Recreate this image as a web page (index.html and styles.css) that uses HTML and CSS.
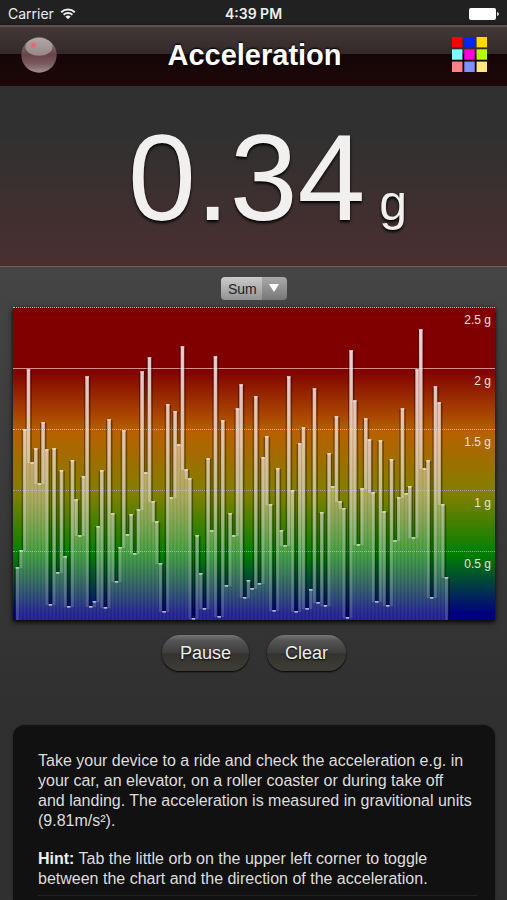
FILE: index.html
```html
<!DOCTYPE html>
<html lang="en">
<head>
<meta charset="utf-8">
<meta name="viewport" content="width=device-width, initial-scale=1">
<title>Acceleration</title>
<link rel="stylesheet" href="styles.css">
</head>
<body>
<div class="status">
  <div class="carrier">
    <span>Carrier</span>
    <svg class="wifi" viewBox="0 0 16 12" aria-hidden="true">
      <path d="M1.2 4.2C5 .6 11 .6 14.8 4.2M3.6 6.7C6 4.5 10 4.5 12.400 6.700" fill="none" stroke="#eee" stroke-width="1.9"/>
      <path d="M5.300 8.500C6.800 7.200 9.200 7.200 10.700 8.500L8 11.300Z" fill="#eee"/>
    </svg>
  </div>
  <span class="time">4:39 PM</span>
  <svg class="battery" viewBox="0 0 30 12" aria-hidden="true">
    <rect width="27" height="12" rx="2" fill="#fff"/>
    <path d="M28 4Q30 4.500 30 6T28 8Z" fill="#ddd"/>
  </svg>
</div>
<header class="bar">
  <button class="orb" aria-label="Toggle chart and direction">
    <svg viewBox="0 0 36 36" aria-hidden="true">
      <defs>
        <linearGradient id="ball" x1="0" y1="0" x2="0" y2="1">
          <stop offset="0" stop-color="#8d8080"/><stop offset=".5" stop-color="#684448"/>
          <stop offset=".75" stop-color="#7a5b5e"/><stop offset="1" stop-color="#a09093"/>
        </linearGradient>
        <linearGradient id="shine" x1="0" y1="0" x2="0" y2="1">
          <stop offset="0" stop-color="#b0a8a8"/><stop offset="1" stop-color="#988587"/>
        </linearGradient>
        <radialGradient id="spot">
          <stop offset="0" stop-color="#ff5566"/><stop offset="1" stop-color="#ff5566" stop-opacity="0"/>
        </radialGradient>
      </defs>
      <circle cx="18" cy="18" r="17.700" fill="url(#ball)"/>
      <ellipse cx="18" cy="9.800" rx="13.500" ry="9" fill="url(#shine)"/>
      <circle cx="12.500" cy="8" r="4" fill="url(#spot)"/>
    </svg>
  </button>
  <h1>Acceleration</h1>
  <button class="palette" aria-label="Colours">
    <svg viewBox="0 0 36 36" aria-hidden="true">
      <rect x="0" y="0" width="10.400" height="10.400" fill="#f00"/><rect x="12.300" y="0" width="10.400" height="10.400" fill="#0026ff"/><rect x="24.600" y="0" width="10.400" height="10.400" fill="#ffd800"/>
      <rect x="0" y="12.300" width="10.400" height="10.400" fill="#7ffdff"/><rect x="12.300" y="12.300" width="10.400" height="10.400" fill="#f0d"/><rect x="24.600" y="12.300" width="10.400" height="10.400" fill="#b6ff00"/>
      <rect x="0" y="24.600" width="10.400" height="10.400" fill="#ff7f86"/><rect x="12.300" y="24.600" width="10.400" height="10.400" fill="#8091ff"/><rect x="24.600" y="24.600" width="10.400" height="10.400" fill="#ffe97f"/>
    </svg>
  </button>
</header>
<section class="reading"><span class="value">0.34</span> <span class="unit">g</span></section>
<main>
  <div class="picker">
    <select aria-label="Axis"><option>Sum</option><option>X</option><option>Y</option><option>Z</option></select>
    <svg class="arrow" viewBox="0 0 10 8" aria-hidden="true"><path d="M0 0H10L5 8Z" fill="#fff"/></svg>
  </div>
  <div class="chart">
    <ul class="scale"><li>2.5 g</li><li>2 g</li><li>1.5 g</li><li>1 g</li><li>0.5 g</li></ul>
    <svg class="bars" viewBox="0 0 482 313" preserveAspectRatio="none" role="img" aria-label="Acceleration history">
      <defs>
        <linearGradient id="fade" gradientUnits="userSpaceOnUse" x1="0" y1="20" x2="0" y2="313">
          <stop offset="0" stop-color="#f4e8ec" stop-opacity=".68"/>
          <stop offset=".4" stop-color="#ece0e0" stop-opacity=".46"/>
          <stop offset=".75" stop-color="#e0dce0" stop-opacity=".27"/>
          <stop offset="1" stop-color="#e0dce0" stop-opacity=".14"/>
        </linearGradient>
      </defs>
      <g id="shades"></g><g id="columns"></g>
    </svg>
  </div>
  <div class="actions"><button>Pause</button><button>Clear</button></div>
</main>
<article class="info">
  <p>Take your device to a ride and check the acceleration e.g. in your car, an elevator, on a roller coaster or during take off<br>and landing. The acceleration is measured in gravitional units (9.81m/s²).</p>
  <p><b>Hint:</b> Tab the little orb on the upper left corner to toggle between the chart and the direction of the acceleration.</p>
  <hr>
</article>
<script src="chart.js"></script>
</body>
</html>
```
FILE: styles.css
```css
* { box-sizing: border-box; }
body {
  margin: 0;
  min-height: 100vh;
  display: flex;
  flex-direction: column;
  background: #303030;
  color: #eee;
  font-family: "Liberation Sans", sans-serif;
}
button { border: 0; padding: 0; background: none; font: inherit; color: inherit; }
svg { display: block; }

.status {
  height: 25px;
  padding: 2px 8px 0;
  display: grid;
  grid-template-columns: 1fr auto 1fr;
  align-items: center;
  background: #212121;
  font-family: Inter, sans-serif;
}
.carrier { display: flex; align-items: center; gap: 6px; font-size: 14px; }
.wifi { width: 16px; height: 12px; }
.time { font-size: 14px; font-weight: 600; }
.battery { width: 30px; height: 12px; justify-self: end; }

.bar {
  height: 61px;
  padding: 0 19px 3px 21px;
  display: flex;
  align-items: center;
  justify-content: space-between;
  border-top: 2px solid #5c5351;
  background: linear-gradient(#443938, #332929 45%, #150607 46%, #1c0709);
  box-shadow: 0 1px 3px #000;
}
.bar h1 {
  margin: 0;
  font-size: 29px;
  color: #fff;
  text-shadow: 0 -1px 2px #000;
}
.orb svg, .palette svg { width: 36px; height: 36px; }

.reading {
  height: 181px;
  padding: 22px 0 0 28px;
  text-align: center;
  line-height: 140px;
  font-size: 50px;
  color: #f2f0ef;
  text-shadow: 0 2px 3px #000;
  background: linear-gradient(#303030 25%, #4a2f30);
  border-bottom: 1px solid #6b6259;
}
.value { font-size: 122px; }

main {
  display: flex;
  flex-direction: column;
  padding: 10px 12px 54px 13px;
  background: linear-gradient(#454545, #303030 95%);
}
.picker { position: relative; align-self: center; }
.picker select {
  display: block;
  width: 66px;
  height: 23px;
  padding: 0 0 0 7px;
  border: 0;
  border-radius: 4px;
  appearance: none;
  font: 14px "Liberation Sans", sans-serif;
  color: #222;
  background:
    linear-gradient(#aaa, #777) right / 25px 100% no-repeat,
    linear-gradient(#ccc, #929292);
}
.arrow { position: absolute; right: 8px; top: 7px; width: 10px; height: 8px; pointer-events: none; }

.chart {
  display: grid;
  margin-top: 7px;
  background: linear-gradient(#800000 20%, #b86000 40%, #808000 60%, #008000 79%, #000080 98%);
  box-shadow: 0 2px 5px #000;
}
.scale, .bars { grid-area: 1 / 1; }
.scale {
  margin: 0;
  padding: 0 0 8px;
  list-style: none;
  font-size: 12px;
  text-align: right;
  line-height: 24px;
  color: #e8e0dc;
}
.scale li {
  height: 61px;
  padding-right: 4px;
  border-top: 1px dotted #bbb;
}
.scale li:nth-child(2) { border-top: 1px solid #d88f8f; }
.scale li:nth-child(n+4) { border-top-color: #87a9a0; }
.bars { width: 100%; height: 313px; }
.shade { fill: #000; opacity: .35; }
.column { fill: url(#fade); }
.stripe { fill: url(#fade); opacity: .4; }
.cap { fill: #fff; opacity: .7; }

.actions { display: flex; justify-content: center; gap: 18px; margin-top: 15px; }
.actions button {
  height: 36px;
  padding: 0 18px;
  border-radius: 18px;
  font-size: 18px;
  color: #eee;
  text-shadow: 0 1px 2px #000;
  background: linear-gradient(#777 0, #555 15%, #3d3d3d 50%, #35332f 52%, #3f3d38);
  box-shadow: 0 1px 2px #000;
}

.info {
  flex: 1;
  margin: 0 12px 0 13px;
  padding: 26px 18px 0 25px;
  border-radius: 12px 12px 0 0;
  background: #111;
  box-shadow: 0 0 2px #181818;
  font-size: 16px;
  line-height: 20px;
  color: #ddd;
}
.info p { margin: 0 0 18px; }
.info p:nth-of-type(2) { margin-bottom: 6px; }
.info b { color: #eee; }
.info hr { margin: 0; border: 0; border-top: 1px solid #222; }
```
FILE: chart.js
```js
// Distance of each sample's top edge from the top of the chart.
const tops = [
  261, 244, 123, 63, 156, 142, 177, 116, 143, 298, 142, 266, 164, 250, 300, 154,
  193, 229, 170, 70, 300, 295, 220, 164, 301, 113, 207, 275, 241, 124, 228, 208,
  247, 203, 65, 166, 51, 195, 215, 257, 305, 98, 191, 105, 138, 40, 163, 172,
  312, 229, 267, 302, 152, 224, 50, 310, 114, 279, 207, 229, 102, 78, 291, 274,
  282, 90, 277, 151, 130, 198, 304, 162, 224, 239, 70, 184, 305, 137, 121, 302,
  283, 82, 296, 206, 299, 147, 180, 110, 195, 202, 311, 44, 94, 238, 182, 112,
  133, 186, 295, 134, 205, 299, 153, 234, 191, 102, 187, 180, 231, 63, 23, 162,
  154, 291, 80, 96, 198, 271
];
const height = 313;
const pitch = 11 / 3;

function addRect(parent, name, x, y, w, h) {
  const rect = document.createElementNS("http://www.w3.org/2000/svg", "rect");
  rect.setAttribute("class", name);
  rect.setAttribute("x", x);
  rect.setAttribute("y", y);
  rect.setAttribute("width", w);
  rect.setAttribute("height", Math.max(h, 1));
  document.getElementById(parent).append(rect);
}

tops.forEach((top, i) => {
  const x = 2.6 + i * pitch;
  const previous = i ? tops[i - 1] : height;
  const next = i < tops.length - 1 ? tops[i + 1] : height;
  // Shadow falls only on the part of a bar that rises above its neighbour.
  if (previous > top) addRect("shades", "shade", x - 1.3, top, 1.3, previous - top);
  if (next > top) addRect("shades", "shade", x + pitch, top, 1.6, next - top);
  addRect("columns", "column", x, top, pitch, height - top);
  addRect("columns", "stripe", x + 0.8, top, 2, height - top);
  // The exposed part of a bar is brighter than the part beside its neighbours.
  addRect("columns", "column", x + 0.4, top, 2.9, Math.max(previous, next) - top);
  addRect("columns", "cap", x, top - 1, pitch, 1.5);
});
```
